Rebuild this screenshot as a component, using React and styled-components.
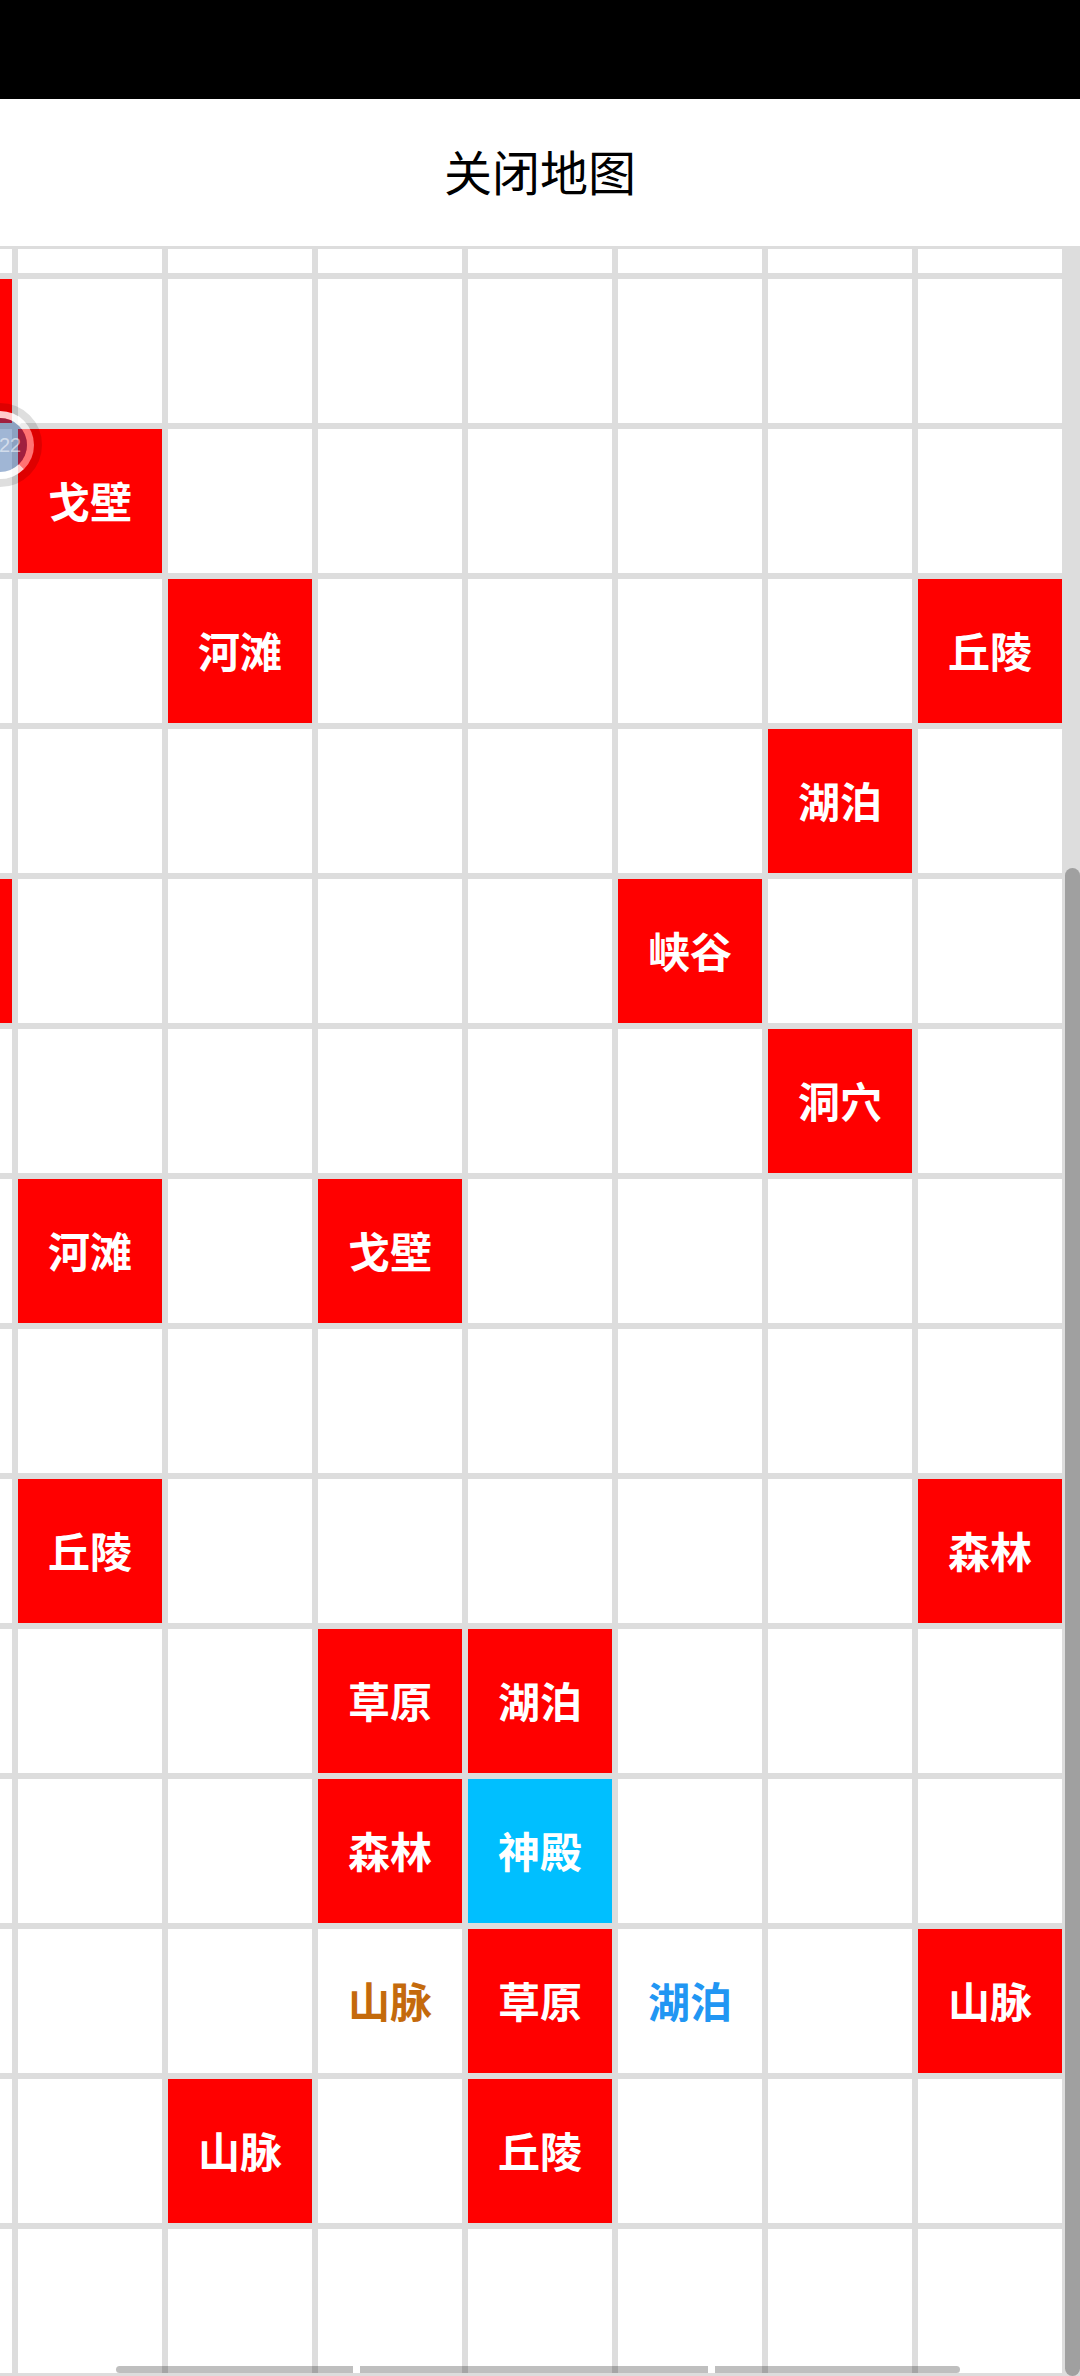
import styled, { createGlobalStyle } from "styled-components";

const GlobalStyle = createGlobalStyle`
  html, body {
    margin: 0;
    padding: 0;
    background: #fff;
  }
  * {
    box-sizing: border-box;
  }
`;

const Page = styled.div`
  width: 1080px;
  height: 2376px;
  display: flex;
  flex-direction: column;
  overflow: hidden;
  position: relative;
  font-family: "Noto Sans CJK SC", "Noto Sans", sans-serif;
`;

const StatusBar = styled.div`
  height: 99px;
  flex: none;
  background: #000;
`;

const CloseBar = styled.div`
  height: 150px;
  flex: none;
  display: flex;
  align-items: center;
  justify-content: center;
  padding-bottom: 6px;
  background: #fff;
  border-bottom: 3px solid #ddd;
  font-size: 48px;
  color: #000;
`;

const MapViewport = styled.div`
  flex: 1;
  min-height: 0;
  overflow: hidden;
  position: relative;
`;

// the map is scrolled, so the top left cell is only partly in view
const MapGrid = styled.div`
  display: grid;
  grid-template-columns: repeat(8, 144px);
  grid-auto-rows: 144px;
  gap: 6px;
  width: max-content;
  margin: -120px 0 0 -132px;
  background: #ddd;
`;

const Cell = styled.div`
  display: flex;
  align-items: center;
  justify-content: center;
  padding-bottom: 3px;
  font-size: 42px;
  font-weight: 700;
  background: ${(p) => p.$bg || "#fff"};
  color: ${(p) => p.$color || "#fff"};
`;

const VerticalTrack = styled.div`
  position: absolute;
  top: 0;
  right: 0;
  bottom: 0;
  width: 18px;
  background: #ddd;
`;

const VerticalThumb = styled.div`
  position: absolute;
  top: 619px;
  right: 0;
  bottom: 0;
  width: 15px;
  background: #a0a0a0;
  border-radius: 8px;
`;

const HorizontalBar = styled.div`
  position: absolute;
  left: 116px;
  bottom: 3px;
  display: flex;
  gap: 7px;
`;

const HorizontalSegment = styled.div`
  width: ${(p) => p.$width}px;
  height: 7px;
  background: rgba(0, 0, 0, 0.25);
  border-radius: ${(p) => p.$radius};
`;

const FloatingBadge = styled.div`
  position: absolute;
  left: -42px;
  top: 403px;
  width: 84px;
  height: 84px;
  border-radius: 50%;
  border: 8px solid rgba(0, 0, 0, 0.13);
`;

const BadgeRing = styled.div`
  width: 100%;
  height: 100%;
  border-radius: 50%;
  border: 7px solid rgba(255, 255, 255, 0.45);
  border-top-color: rgba(255, 255, 255, 0.8);
  border-bottom-color: rgba(255, 255, 255, 0.8);
`;

const BadgeFace = styled.div`
  width: 100%;
  height: 100%;
  border-radius: 50%;
  background: rgba(24, 78, 153, 0.41);
  display: flex;
  align-items: center;
  justify-content: center;
  padding-left: 20px;
  font-family: "Liberation Sans", sans-serif;
  font-size: 20px;
  color: rgba(255, 255, 255, 0.55);
`;

const RED = "#ff0000";
const SKY = "#00bfff";

// key is "row-col"
const tiles = {
  "1-0": { text: "" },
  "2-1": { text: "戈壁" },
  "3-2": { text: "河滩" },
  "3-7": { text: "丘陵" },
  "4-6": { text: "湖泊" },
  "5-0": { text: "" },
  "5-5": { text: "峡谷" },
  "6-6": { text: "洞穴" },
  "7-1": { text: "河滩" },
  "7-3": { text: "戈壁" },
  "9-1": { text: "丘陵" },
  "9-7": { text: "森林" },
  "10-3": { text: "草原" },
  "10-4": { text: "湖泊" },
  "11-3": { text: "森林" },
  "11-4": { text: "神殿", bg: SKY },
  "12-3": { text: "山脉", bg: "#fff", color: "#c46a0c" },
  "12-4": { text: "草原" },
  "12-5": { text: "湖泊", bg: "#fff", color: "#2196f3" },
  "12-7": { text: "山脉" },
  "13-2": { text: "山脉" },
  "13-4": { text: "丘陵" },
};

const cells = [];
for (let row = 0; row < 16; row++) {
  for (let col = 0; col < 8; col++) {
    cells.push({ key: row + "-" + col, tile: tiles[row + "-" + col] });
  }
}

export default function App() {
  return (
    <Page>
      <GlobalStyle />
      <StatusBar />
      <CloseBar>关闭地图</CloseBar>
      <MapViewport>
        <MapGrid>
          {cells.map(({ key, tile }) => (
            <Cell
              key={key}
              $bg={tile ? tile.bg || RED : undefined}
              $color={tile && tile.color}
            >
              {tile && tile.text}
            </Cell>
          ))}
        </MapGrid>
        <VerticalTrack>
          <VerticalThumb />
        </VerticalTrack>
      </MapViewport>
      <HorizontalBar>
        <HorizontalSegment $width={237} $radius="4px 0 0 4px" />
        <HorizontalSegment $width={348} $radius="0" />
        <HorizontalSegment $width={245} $radius="0 4px 4px 0" />
      </HorizontalBar>
      <FloatingBadge>
        <BadgeRing>
          <BadgeFace>22</BadgeFace>
        </BadgeRing>
      </FloatingBadge>
    </Page>
  );
}
